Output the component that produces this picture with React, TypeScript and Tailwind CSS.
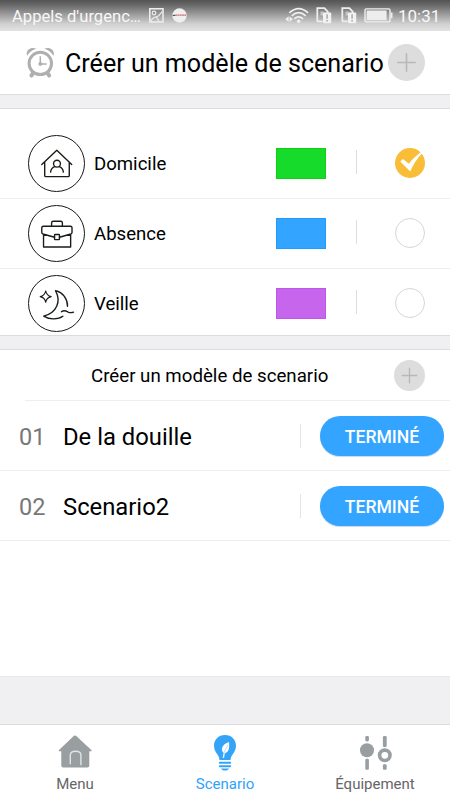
import type { ReactNode } from 'react';

type Mode = {
    label: string;
    swatch: string;
    selected: boolean;
    icon: ReactNode;
};

const MODES: Mode[] = [
    { label: 'Domicile', swatch: 'bg-[#17db2b] border-[#0fd30f]', selected: true, icon: <HomeModeIcon /> },
    { label: 'Absence', swatch: 'bg-[#33a4ff] border-[#1e9cff]', selected: false, icon: <BriefcaseIcon /> },
    { label: 'Veille', swatch: 'bg-[#c666ec] border-[#c055ec]', selected: false, icon: <NightIcon /> },
];

const SCENARIOS = [
    { id: '01', name: 'De la douille' },
    { id: '02', name: 'Scenario2' },
];

function HomeModeIcon() {
    return (
        <svg className="size-[55px] shrink-0" viewBox="0 0 56 56" fill="none" stroke="#181c14" strokeWidth="1.4" strokeLinecap="round" strokeLinejoin="round">
            <path d="M13 29 28.3 14.5 43.5 29M16 27v13.2q0 1.2 1.2 1.2h22.6q1.2 0 1.2-1.2V27" />
            <circle cx="28.5" cy="28.2" r="3.5" />
            <path d="M22 36.7c.4-3 2-4.8 4.2-5.5M35 36.7c-.4-3-2-4.8-4.2-5.5" />
        </svg>
    );
}

function BriefcaseIcon() {
    return (
        <svg className="size-[55px] shrink-0" viewBox="0 0 56 56" fill="none" stroke="#181c1c" strokeWidth="1.4" strokeLinecap="round" strokeLinejoin="round">
            <path d="M23 20v-2.8q0-1.7 1.7-1.7h7.6q1.7 0 1.7 1.7V20" />
            <path d="M26 31.8 14.2 28.5q-1.2-.4-1.2-1.5v-4.8q0-1.6 1.6-1.6h27.6q1.6 0 1.6 1.6V27q0 1.1-1.2 1.5L31 31.8M14.8 29v12.7h27.6V29" />
            <rect x="26" y="29" width="5" height="5.2" rx=".6" />
        </svg>
    );
}

function NightIcon() {
    return (
        <svg className="size-[55px] shrink-0" viewBox="0 0 56 56" fill="none" stroke="#181c1c" strokeWidth="1.4" strokeLinecap="round" strokeLinejoin="round">
            <path d="M17 15.2q.9 4.9 5.6 5.8-4.7.9-5.6 5.8-.9-4.9-5.6-5.8 4.7-.9 5.6-5.8Z" strokeWidth="1.1" />
            <path d="M39.2 30.8c.2-6.8-4.6-14.5-12.2-15.8 5.7 10.5 1.8 22.3-12 25.8 5.5 3.7 14.6 3.9 19.5.2" />
            <path d="M33 36.4c3.3-2.2 5-.6 6.8.3 1.6.7 3.7.8 5.5.1" />
        </svg>
    );
}

function AlarmIcon() {
    return (
        <svg className="h-[31px] w-[29px] shrink-0" viewBox="0 0 29 31" fill="none" stroke="#afafaf">
            <path d="M1.2 8.8C-1 3.6 4.6-1 10.4 1.8 6.5 2.8 3.4 5.2 1.2 8.8ZM27.4 8.8C29.6 3.6 24-1 18.2 1.8 22.1 2.8 25.2 5.2 27.4 8.8Z" fill="#afafaf" stroke="none" />
            <circle cx="14.3" cy="16.4" r="11.2" strokeWidth="3" />
            <path d="M14.3 9.3v7.7h6.4" strokeWidth="1.5" />
            <circle cx="14.3" cy="16.9" r="1.9" fill="#afafaf" stroke="none" />
            <path d="m7 26-1.5 2.6M21.6 26l1.5 2.6" strokeWidth="4" strokeLinecap="round" />
        </svg>
    );
}

function AddButton({ small }: { small?: boolean }) {
    return (
        <button aria-label="Ajouter" className={small ? 'size-[31px] shrink-0' : 'size-[37px] shrink-0'}>
            <svg className="size-full" viewBox="0 0 36 36">
                <circle cx="18" cy="18" r="18" fill="#dddddd" />
                <path d="M9 18h18M18 9v18" stroke="#b8b8b8" strokeWidth="1.6" />
            </svg>
        </button>
    );
}

function SimIcon() {
    return (
        <svg className="h-[17px] w-4" viewBox="0 0 16 17">
            <path d="M1.3 14.3V1.2h7.1l3.3 3.4V6M1 14.3h5.5" fill="none" stroke="#ededed" strokeWidth="1.8" />
            <path d="M4.5 4.5h3.2v4H4.5z" fill="#e8e8e8" opacity=".6" />
            <rect x="7" y="5.4" width="8.2" height="10.8" rx="1" fill="#f2f2f2" />
            <path d="M11.1 7.2v4.5M11.1 13v1.6" stroke="#a9a9a9" strokeWidth="1.5" />
        </svg>
    );
}

function StatusBar() {
    return (
        <div className="flex h-[31px] shrink-0 items-center bg-[linear-gradient(#545454_0%,#686868_16%,#a2a2a2_50%,#d2d2d2_78%,#e3e3e3_100%)] pl-3 text-[#f8f8f8]">
            <span className="w-[131px] pt-[3px] text-[16.6px] whitespace-nowrap">Appels d'urgenc…</span>
            <svg className="ml-[6px] size-[15px]" viewBox="0 0 15 15" fill="none" stroke="#ececec" strokeWidth="1.2">
                <rect x=".8" y=".8" width="13.2" height="13.2" strokeWidth="1.6" />
                <circle cx="5" cy="5" r="1.8" />
                <path d="M2 13c1-3.5 4-3.7 6-4.3 2.4-.8 3-2.4 5.3-5.4M7.5 9l2.3 4.2" />
            </svg>
            <svg className="ml-2 size-[15px]" viewBox="0 0 15 15">
                <circle cx="7.5" cy="7.5" r="7.2" fill="#f0efef" />
                <path d="M.7 7.4h2.8" stroke="#555" strokeWidth="1.2" />
                <path d="M3.5 7.1h10.7" stroke="#c8686e" strokeWidth="1.4" strokeDasharray="1.8 .4" />
            </svg>
            <svg className="ml-[98px] h-[17px] w-[25px]" viewBox="0 0 25 17" fill="none" stroke="#efefef" strokeWidth="1.7">
                <path d="M4.3 5.8q9.4-8.5 18.8 0M6.7 8.8q7-6.2 14 0M9.3 11.8q4.4-3.9 8.8 0" />
                <circle cx="13.7" cy="14.3" r="1.8" fill="#efefef" stroke="none" />
                <path d="M3.4 9.8v4.8L.6 12.2ZM4.8 9.8v4.8l2.8-2.4Z" fill="#efefef" strokeWidth=".5" />
            </svg>
            <div className="ml-[6px] flex gap-[9px]">
                <SimIcon />
                <SimIcon />
            </div>
            <svg className="ml-[7px] h-[15px] w-[29px]" viewBox="0 0 29 15">
                <rect x="1" y=".9" width="25" height="13" rx="1.4" fill="none" stroke="#f0f0f0" strokeWidth="1.4" />
                <path d="M2.6 2.5h20v9.8h-20z" fill="#ededed" />
                <path d="M27.6 4.5v5.8" stroke="#ededed" strokeWidth="1.8" />
            </svg>
            <span className="ml-[5px] pt-[2px] text-[17px] whitespace-nowrap">10:31</span>
        </div>
    );
}

function ModeRow({ mode }: { mode: Mode }) {
    return (
        <div className="flex h-[70px] items-center border-b border-[#eeeeee] pl-7 last:border-transparent">
            <div className="flex size-[57px] shrink-0 items-center justify-center rounded-full border-[1.3px] border-[#181818]">
                {mode.icon}
            </div>
            <span className="ml-[9px] w-[182px] pt-[3px] text-[18.6px] text-black">{mode.label}</span>
            <div className={`h-[31px] w-[50px] border ${mode.swatch}`} />
            <div className="mb-[3px] ml-[30px] h-6 w-px bg-[#dddddd]" />
            {mode.selected ? (
                <svg className="mb-px ml-[38px] size-[30px]" viewBox="0 0 30 30">
                    <circle cx="15" cy="15" r="15" fill="#f9bd37" />
                    <path d="M5.2 13.4 8 11l5.8 4.7c4-4.8 7.7-8.4 12.5-12l1 1.6c-5.2 4.9-9.2 11.4-12 18.1Z" fill="#fff" />
                </svg>
            ) : (
                <div className="mb-px ml-[38px] size-[30px] rounded-full border-[1.5px] border-[#d6d6d6]" />
            )}
        </div>
    );
}

function TabBar() {
    return (
        <nav className="grid h-[76px] grid-cols-3 border-t border-[#dcdcdc] bg-white text-[15px] text-[#666]">
            <div className="flex flex-col items-center pt-[10px]">
                <svg className="h-[34px] w-9" viewBox="0 0 36 34">
                    <path d="M17 .8q1-.8 2 0L34.3 15q1 1.2-.8 1.3h-1.2v14.4q0 1.8-1.8 1.8H6.1q-1.8 0-1.8-1.8V16.3H2.8q-1.7 0-.8-1.3Z" fill="#999ea1" />
                    <path d="M13.3 28.7V20q0-3.8 5.3-3.8t5.3 3.8v9.7" fill="none" stroke="#e1e5e7" strokeWidth="1.4" strokeLinecap="round" />
                </svg>
                <span className="mt-[5px] leading-5">Menu</span>
            </div>
            <div className="flex flex-col items-center pt-[10px] text-[#2fa2fb]">
                <svg className="h-9 w-6" viewBox="0 0 24 36">
                    <path d="M12 0C5.3 0 1 4.8 1 10.8c0 3.6 1.5 6.2 3.4 8.7C5.8 21.3 6.2 23 6.5 25h11c.3-2 .7-3.7 2.1-5.5 1.9-2.5 3.4-5.1 3.4-8.7C23 4.8 18.7 0 12 0Z" fill="#33a4f8" />
                    <path d="M16 7c.8 6.5-.5 10.5-4.2 11.2l-.7 4.5h-1.5l1-4.8C6.8 14.3 9.5 9.2 16 7Z" fill="#fff" />
                    <path d="m15 9.8-4.2 8.4" stroke="#83c7fc" strokeWidth=".6" />
                    <path d="M6.8 27.8h10.4M6.8 31.3h10.4" stroke="#33a4f8" strokeWidth="2" strokeLinecap="round" />
                    <path d="M8 33.5h8c-.8 1.4-2 2-4 2s-3.2-.6-4-2Z" fill="#33a4f8" />
                </svg>
                <span className="mt-[3px] leading-5">Scenario</span>
            </div>
            <div className="flex flex-col items-center pt-[11px]">
                <svg className="ml-[2px] h-[34px] w-8" viewBox="0 0 32 34" fill="none" stroke="#999ea1">
                    <g fill="#999ea1" stroke="none">
                        <rect x="5.3" y="0" width="3.6" height="5.4" rx="1.3" />
                        <circle cx="7" cy="14.3" r="7" />
                        <rect x="5.3" y="22.7" width="3.6" height="11" rx="1.3" />
                        <rect x="22.9" y="0" width="3.8" height="11" rx="1.3" />
                        <rect x="22.9" y="28.3" width="3.8" height="5.4" rx="1.3" />
                    </g>
                    <circle cx="24.8" cy="19.3" r="5.2" strokeWidth="3.6" />
                </svg>
                <span className="mt-1 leading-5">Équipement</span>
            </div>
        </nav>
    );
}

export default function App() {
    return (
        <div className="flex h-[800px] w-[450px] flex-col overflow-hidden bg-[#f0f0f2] font-['Roboto',sans-serif]">
            <StatusBar />

            <header className="flex h-16 shrink-0 items-center border-b border-[#dddddd] bg-white pl-[26px]">
                <AlarmIcon />
                <h1 className="ml-[10px] w-[323px] pt-[3px] text-[25.1px] whitespace-nowrap text-black">Créer un modèle de scenario</h1>
                <AddButton />
            </header>

            <section className="mt-[13px] h-[228px] shrink-0 border-y border-[#dcdcdc] bg-white pt-5">
                {MODES.map((mode) => (
                    <ModeRow key={mode.label} mode={mode} />
                ))}
            </section>

            <section className="mt-[13px] h-[327px] shrink-0 border-t border-[#dcdcdc] bg-white">
                <div className="ml-[25px] flex h-[51px] items-center border-b border-[#eeeeee] pl-[66px]">
                    <h2 className="w-[303px] pt-[3px] text-[18.7px] whitespace-nowrap text-black">Créer un modèle de scenario</h2>
                    <AddButton small />
                </div>
                {SCENARIOS.map((scenario) => (
                    <div key={scenario.id} className="flex h-[70px] items-center border-b border-[#eeeeee] pl-[19px]">
                        <span className="w-11 pt-[5px] text-[23.5px] text-[#777]">{scenario.id}</span>
                        <span className="w-[237px] pt-[5px] text-[23.8px] text-black">{scenario.name}</span>
                        <div className="h-6 w-px bg-[#e4e4e4]" />
                        <button className="ml-[19px] h-10 w-[124px] rounded-full bg-[#33a4ff] pt-[3px] text-[17.6px] font-medium text-white shadow-[0_1px_1px_#c9d9e8]">
                            TERMINÉ
                        </button>
                    </div>
                ))}
            </section>

            <div className="mt-auto border-t border-[#e8e8ea] pt-[47px]">
                <TabBar />
            </div>
        </div>
    );
}
